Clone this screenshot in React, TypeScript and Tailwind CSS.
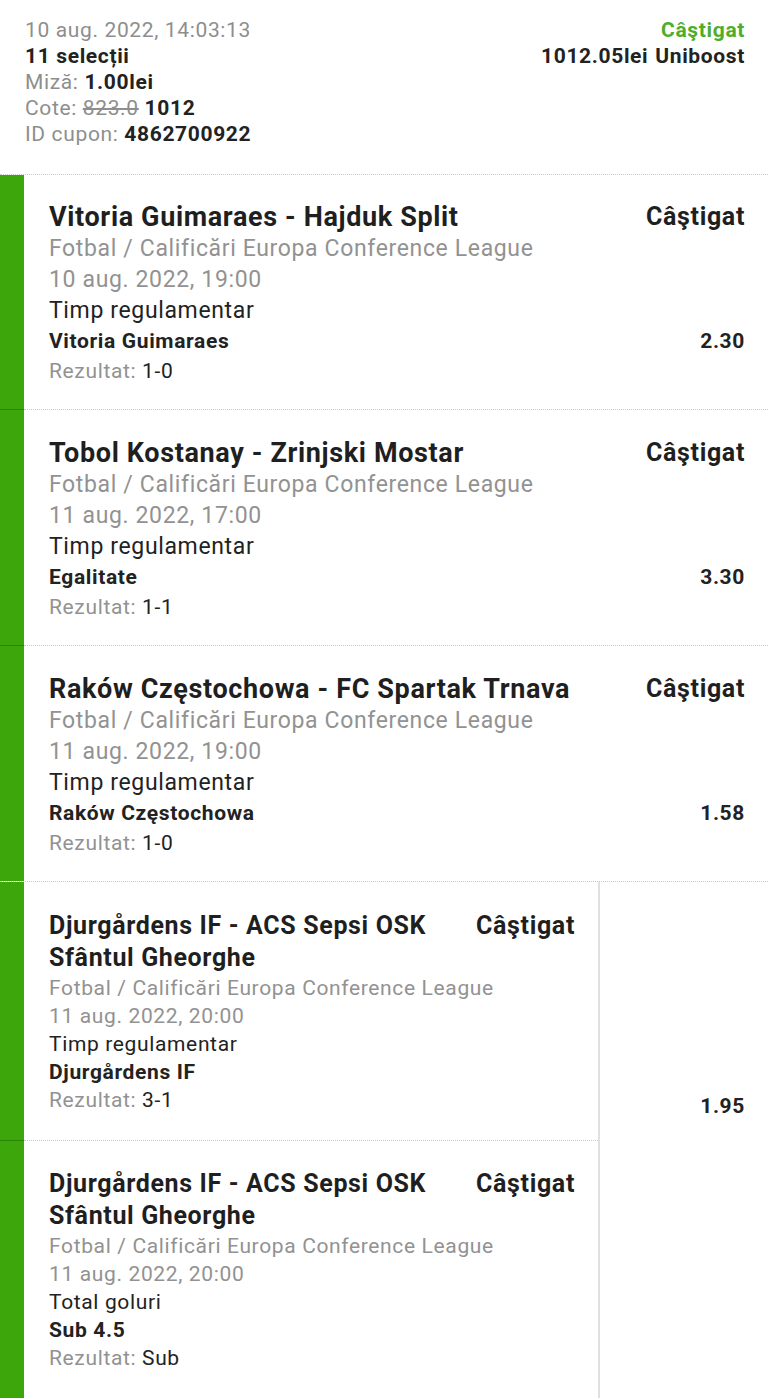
import * as React from "react"

type Pick = {
    title: string
    league: string
    date: string
    market: string
    selection: string
    result: string
    odds?: string
}

const picks: Pick[] = [
    {
        title: "Vitoria Guimaraes - Hajduk Split",
        league: "Fotbal / Calificări Europa Conference League",
        date: "10 aug. 2022, 19:00",
        market: "Timp regulamentar",
        selection: "Vitoria Guimaraes",
        result: "1-0",
        odds: "2.30",
    },
    {
        title: "Tobol Kostanay - Zrinjski Mostar",
        league: "Fotbal / Calificări Europa Conference League",
        date: "11 aug. 2022, 17:00",
        market: "Timp regulamentar",
        selection: "Egalitate",
        result: "1-1",
        odds: "3.30",
    },
    {
        title: "Raków Częstochowa - FC Spartak Trnava",
        league: "Fotbal / Calificări Europa Conference League",
        date: "11 aug. 2022, 19:00",
        market: "Timp regulamentar",
        selection: "Raków Częstochowa",
        result: "1-0",
        odds: "1.58",
    },
]

const grouped: Pick[] = [
    {
        title: "Djurgårdens IF - ACS Sepsi OSK Sfântul Gheorghe",
        league: "Fotbal / Calificări Europa Conference League",
        date: "11 aug. 2022, 20:00",
        market: "Timp regulamentar",
        selection: "Djurgårdens IF",
        result: "3-1",
    },
    {
        title: "Djurgårdens IF - ACS Sepsi OSK Sfântul Gheorghe",
        league: "Fotbal / Calificări Europa Conference League",
        date: "11 aug. 2022, 20:00",
        market: "Total goluri",
        selection: "Sub 4.5",
        result: "Sub",
    },
]

function Header() {
    return (
        <div className="flex justify-between border-b border-dotted border-[#c9c9c9] pl-[25px] pr-[23px] pt-[17px] pb-[27px] text-[21px] leading-[26px]">
            <div>
                <div className="text-[#8e8e8e]">10 aug. 2022, 14:03:13</div>
                <div className="font-bold text-[#222]">11 selecții</div>
                <div className="text-[#8e8e8e]">
                    Miză: <span className="font-bold text-[#222]">1.00lei</span>
                </div>
                <div className="text-[#8e8e8e]">
                    Cote: <span className="line-through">823.0</span>{" "}
                    <span className="font-bold text-[#222]">1012</span>
                </div>
                <div className="text-[#8e8e8e]">
                    ID cupon: <span className="font-bold text-[#222]">4862700922</span>
                </div>
            </div>
            <div className="text-right font-bold">
                <div className="text-[#4dae2c]">Câştigat</div>
                <div className="text-[#222]">
                    1012.05lei<span className="ml-[7px]">Uniboost</span>
                </div>
            </div>
        </div>
    )
}

function PickCard({ pick, first }: { pick: Pick; first?: boolean }) {
    return (
        <div className="flex">
            <div className={`w-[24px] shrink-0 bg-[#3da60b] ${first ? "" : "border-t border-[#2c8606]"}`} />
            <div
                className={`flex-1 pl-[25px] pr-[23px] pb-[23px] ${
                    first ? "pt-[26px]" : "border-t border-dotted border-[#c9c9c9] pt-[27px]"
                }`}
            >
                <div className="flex items-start justify-between gap-4">
                    <div className="text-[27px] font-bold leading-[32px] text-[#1f1f1f]">{pick.title}</div>
                    <div className="text-[25px] font-bold leading-[32px] text-[#1f1f1f]">Câştigat</div>
                </div>
                <div className="text-[23px] leading-[31px] text-[#929292]">{pick.league}</div>
                <div className="text-[23px] leading-[31px] text-[#929292]">{pick.date}</div>
                <div className="text-[23px] leading-[31px] text-[#222]">{pick.market}</div>
                <div className="flex justify-between text-[21px] font-bold leading-[30px] text-[#222]">
                    <span>{pick.selection}</span>
                    <span>{pick.odds}</span>
                </div>
                <div className="text-[21px] leading-[30px] text-[#929292]">
                    Rezultat: <span className="text-[#222]">{pick.result}</span>
                </div>
            </div>
        </div>
    )
}

function GroupedCard({ pick, first }: { pick: Pick; first?: boolean }) {
    return (
        <div className="flex">
            <div className={`w-[24px] shrink-0 bg-[#3da60b] ${first ? "" : "border-t border-[#2c8606]"}`} />
            <div
                className={`flex-1 pl-[25px] pr-[23px] ${
                    first ? "pt-[28px] pb-[26px]" : "border-t border-dotted border-[#c9c9c9] pt-[27px] pb-[26px]"
                }`}
            >
                <div className="flex items-start justify-between gap-5">
                    <div className="text-[25px] font-bold leading-[32px] text-[#1f1f1f]">{pick.title}</div>
                    <div className="shrink-0 text-[25px] font-bold leading-[32px] text-[#1f1f1f]">Câştigat</div>
                </div>
                <div className="text-[21px] leading-[28px] text-[#929292]">{pick.league}</div>
                <div className="text-[21px] leading-[28px] text-[#929292]">{pick.date}</div>
                <div className="text-[21px] leading-[28px] text-[#222]">{pick.market}</div>
                <div className="text-[21px] font-bold leading-[28px] text-[#222]">{pick.selection}</div>
                <div className="text-[21px] leading-[28px] text-[#929292]">
                    Rezultat: <span className="text-[#222]">{pick.result}</span>
                </div>
            </div>
        </div>
    )
}

export default function App() {
    return (
        <div
            className="min-h-[1399px] w-[768px] bg-white tracking-[0.04em]"
            style={{ fontFamily: "Roboto, 'Noto Sans', sans-serif" }}
        >
            <Header />
            {picks.map((p, i) => (
                <PickCard key={i} pick={p} first={i === 0} />
            ))}
            <div className="flex border-t border-dotted border-[#c9c9c9]">
                <div className="w-[600px] shrink-0 border-r-2 border-solid border-r-[#e0e0e0]">
                    {grouped.map((p, i) => (
                        <GroupedCard key={i} pick={p} first={i === 0} />
                    ))}
                </div>
                <div className="flex-1 pt-[209px] pr-[23px] text-right text-[21px] font-bold leading-[30px] text-[#222]">
                    1.95
                </div>
            </div>
        </div>
    )
}
